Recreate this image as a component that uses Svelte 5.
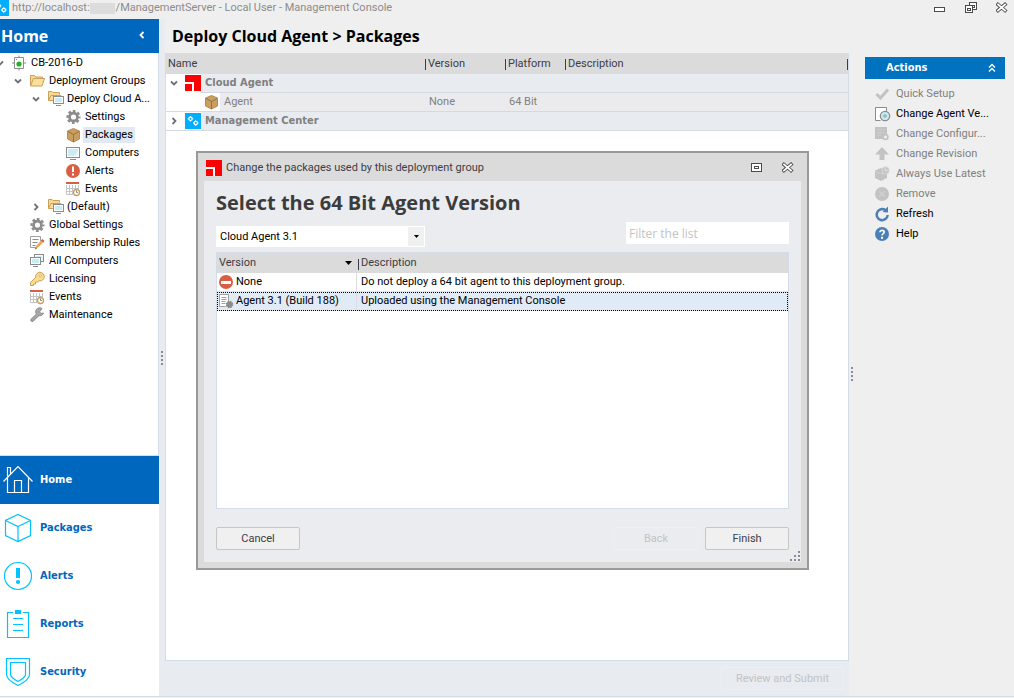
<script>
    let activeSection = $state('Home');
    let selectedNode = $state('Packages');
    let selectedVersion = $state('Agent 3.1 (Build 188)');
    let dialogOpen = $state(true);
    let filter = $state('');

    const tree = [
        { level: 0, label: 'CB-2016-D', icon: 'server', state: 'open' },
        { level: 1, label: 'Deployment Groups', icon: 'folder', state: 'open' },
        { level: 2, label: 'Deploy Cloud A...', icon: 'group', state: 'open' },
        { level: 3, label: 'Settings', icon: 'gear' },
        { level: 3, label: 'Packages', icon: 'box' },
        { level: 3, label: 'Computers', icon: 'computer' },
        { level: 3, label: 'Alerts', icon: 'alert' },
        { level: 3, label: 'Events', icon: 'events' },
        { level: 2, label: '(Default)', icon: 'group', state: 'closed' },
        { level: 1, label: 'Global Settings', icon: 'gear' },
        { level: 1, label: 'Membership Rules', icon: 'rules' },
        { level: 1, label: 'All Computers', icon: 'computers' },
        { level: 1, label: 'Licensing', icon: 'key' },
        { level: 1, label: 'Events', icon: 'events' },
        { level: 1, label: 'Maintenance', icon: 'wrench' }
    ];

    const sections = ['Home', 'Packages', 'Alerts', 'Reports', 'Security'];

    const actions = [
        { label: 'Quick Setup', icon: 'check', disabled: true },
        { label: 'Change Agent Ve...', icon: 'disc' },
        { label: 'Change Configur...', icon: 'config', disabled: true },
        { label: 'Change Revision', icon: 'up', disabled: true },
        { label: 'Always Use Latest', icon: 'latest', disabled: true },
        { label: 'Remove', icon: 'remove', disabled: true },
        { label: 'Refresh', icon: 'refresh' },
        { label: 'Help', icon: 'help' }
    ];

    const versions = [
        { name: 'None', icon: 'none', description: 'Do not deploy a 64 bit agent to this deployment group.' },
        { name: 'Agent 3.1 (Build 188)', icon: 'agent', description: 'Uploaded using the Management Console' }
    ];

    let visibleVersions = $derived(
        versions.filter((v) => v.name.toLowerCase().includes(filter.toLowerCase()))
    );
</script>

{#snippet chevron(state)}
    <svg class="chevron" width="8" height="8" viewBox="0 0 8 8" aria-hidden="true">
        {#if state === 'open'}
            <path d="M1 2.5L4 5.5L7 2.5" fill="none" stroke="#707078" stroke-width="1.8" />
        {:else if state === 'closed'}
            <path d="M2.5 1L5.5 4L2.5 7" fill="none" stroke="#707078" stroke-width="1.8" />
        {/if}
    </svg>
{/snippet}

{#snippet icon(name)}
    <svg class="icon" width="16" height="16" viewBox="0 0 16 16" fill="none" aria-hidden="true">
        {#if name === 'server'}
            <path d="M7 0.5V3M7 13v2.5" stroke="#8c8c8c" />
            <path d="M2.5 2.5h9v11h-9z" fill="#fff" stroke="#8c8c8c" />
            <path d="M0 8h3M11 8h3" stroke="#8c8c8c" />
            <rect x="4" y="4" width="1" height="1" fill="#1fc01f" />
            <circle cx="7" cy="9" r="2.6" fill="#1fb41f" />
        {:else if name === 'folder'}
            <path d="M0.5 12.5V2.5h4l1.5 1.5h6.500v2" fill="#f7d88c" stroke="#c9a05c" />
            <path d="M0.5 13L3.5 5.500h11L12 13z" fill="#fbdf98" stroke="#c9a05c" />
        {:else if name === 'group'}
            <path d="M0.5 9.500V0.500h3.500l1 1h6.500v2" fill="#f7d88c" stroke="#c9a05c" />
            <path d="M0.500 9.500L3 4.500h10v5z" fill="#fbdf98" stroke="#c9a05c" />
            <rect x="5.500" y="5.500" width="10" height="7" fill="#fff" stroke="#8c8c8c" />
            <rect x="7" y="7" width="7" height="4" fill="#c5ecf3" />
            <path d="M8 14.500h5" stroke="#8c8c8c" />
        {:else if name === 'gear'}
            <circle cx="7.500" cy="8" r="4" stroke="#8c8c8c" stroke-width="2.800" />
            <circle cx="7.500" cy="8" r="6" stroke="#8c8c8c" stroke-width="2.200" stroke-dasharray="2.700 2.010" stroke-dashoffset="1.350" />
        {:else if name === 'box'}
            <path d="M7.500 1.500L13.500 4v8l-6 3-6-3V4z" fill="#c89f60" stroke="#b58d50" />
            <path d="M2 4.500L7.500 7.500l5.500-3M7.500 7.500V15" stroke="#937342" />
        {:else if name === 'computer'}
            <rect x="0.500" y="2.500" width="13" height="10" fill="#fff" stroke="#8c8c8c" />
            <rect x="2" y="4" width="10" height="7" fill="#c9edf3" />
            <path d="M8 11l4-5v5z" fill="#e3f7fa" />
            <path d="M4 14.500h6" stroke="#8c8c8c" />
        {:else if name === 'computers'}
            <rect x="4.500" y="1.500" width="9" height="7" fill="#fff" stroke="#8c8c8c" />
            <path d="M6 3.500h6v4" stroke="#c9edf3" />
            <rect x="0.500" y="4.500" width="10" height="7" fill="#fff" stroke="#8c8c8c" />
            <rect x="2" y="6" width="7" height="4" fill="#c5ecf3" />
            <path d="M3 13.500h5" stroke="#8c8c8c" />
        {:else if name === 'alert'}
            <circle cx="7" cy="8" r="7" fill="#d85f44" />
            <path d="M6 3.500h2V9H6zM6 10.500h2v2H6z" fill="#fff" />
        {:else if name === 'events'}
            <path d="M0.500 4v9.500h6M0 7.500h13M0 10.500h7M3.500 4v10M6.500 4v10M9.500 4v4M12.500 4v4" stroke="#c4c4c4" />
            <rect x="0" y="1" width="13" height="2" fill="#d85f44" />
            <circle cx="10.500" cy="11.500" r="3" fill="#fff" stroke="#c9a05c" stroke-width="1.300" />
            <path d="M10.500 9.500v2h1.500" stroke="#8c8c8c" />
        {:else if name === 'rules'}
            <path d="M10.500 6V1.500h-10v11h7" fill="#fff" stroke="#a0a0a0" />
            <path d="M2.500 4.500h6M2.500 7.500h5M2.500 10.500h3" stroke="#8c8c8c" />
            <path d="M5 14.500l1-3.500 6-6.500 2 2-6.500 6.500z" fill="#efa552" />
            <path d="M11 5.500L12.500 4l2 2L13 7.500z" fill="#d85f44" />
            <path d="M5 14.500l0.600-2 1.500 1.200z" fill="#777" />
        {:else if name === 'key'}
            <path d="M0.500 14.500v-3l5.200-5.200A4.300 4.300 0 1 1 9 9.800l-1.500 1.200h-2v2H3.500v1.500z" fill="#fbdc88" stroke="#c9a05c" />
            <circle cx="10.200" cy="4.700" r="1.200" fill="#fff" stroke="#c9a05c" stroke-width="0.800" />
        {:else if name === 'wrench'}
            <path d="M2.300 13L8 7.500" stroke="#8c8c8c" stroke-width="3.800" stroke-linecap="round" />
            <path d="M12 1.500a4 4 0 1 0 1.500 4.500l-2.500 0.500-1.500-1.700z" fill="#a8a8a8" stroke="#8c8c8c" />
            <path d="M2.500 12.800L9 6.500" stroke="#a8a8a8" stroke-width="2" stroke-linecap="round" />
        {:else if name === 'cloudAgent'}
            <rect width="16" height="16" fill="#f00" />
            <path d="M0 8h8v8" stroke="#fff" stroke-width="2" />
        {:else if name === 'console'}
            <rect width="16" height="16" fill="#00aeff" />
            <circle cx="5.500" cy="5.800" r="1.700" stroke="#fff" stroke-width="1.200" />
            <circle cx="10.800" cy="10" r="1.700" stroke="#fff" stroke-width="1.200" />
            <path d="M5.500 3v5.600M2.700 5.800h5.600" stroke="#fff" stroke-dasharray="1 3.600" />
            <path d="M10.800 7.200v5.600M8 10h5.600" stroke="#fff" stroke-dasharray="1 3.600" />
        {:else if name === 'check'}
            <path d="M1.500 8l4 4 7.500-8.500" stroke="#c3c3c3" stroke-width="3" />
        {:else if name === 'disc'}
            <path d="M11.500 6V1.500h-11v13h5" fill="#fff" stroke="#8c8c8c" />
            <circle cx="10" cy="10" r="4.700" fill="#c5ecf3" stroke="#8c8c8c" stroke-width="1.200" />
            <circle cx="10" cy="10" r="1.200" fill="#fff" stroke="#6d8a94" stroke-width="0.900" />
        {:else if name === 'config'}
            <path d="M0 1h12v6L8 13H0z" fill="#c3c3c3" />
            <path d="M2 4h7M2 6.500h7M2 9h4" stroke="#cecece" />
            <circle cx="10.500" cy="11" r="2.400" fill="#efefef" stroke="#c3c3c3" stroke-width="1.700" />
        {:else if name === 'up'}
            <path d="M7 1l7 7.500h-4.500V14h-5V8.500H0z" fill="#c3c3c3" />
        {:else if name === 'latest'}
            <path d="M0 4.500L6 2l6 2.500v7.500L6 15l-6-3z" fill="#c3c3c3" />
            <path d="M0.500 5.500L6 8l4-1.500" stroke="#d2d2d2" />
            <circle cx="10.500" cy="4.500" r="3.700" fill="#c8c8c8" stroke="#d8d8d8" />
            <path d="M10.500 2.500v2h2" stroke="#e2e2e2" />
        {:else if name === 'remove'}
            <circle cx="7" cy="8" r="7" fill="#c3c3c3" />
            <path d="M4.200 5.200l5.600 5.600M9.800 5.200l-5.600 5.600" stroke="#cecece" stroke-width="1.800" />
        {:else if name === 'refresh'}
            <path d="M10.500 4.200A5.500 5.500 0 1 0 12.700 9" stroke="#4a7fb8" stroke-width="2.500" />
            <path d="M7.500 6L13 6.500V0.500z" fill="#4a7fb8" />
        {:else if name === 'help'}
            <circle cx="7" cy="8" r="7" fill="#4a7fb8" />
            <path d="M4.900 6.200C4.900 3.700 9.200 3.800 9.200 6.200C9.200 7.700 7 7.600 7 9.500" stroke="#fff" stroke-width="1.600" />
            <rect x="6" y="10.800" width="2" height="2" fill="#fff" />
        {:else if name === 'none'}
            <circle cx="8" cy="8" r="7" fill="#d85f44" />
            <rect x="3" y="7" width="10" height="3" fill="#fff" />
        {:else if name === 'agent'}
            <path d="M10.500 8V1.500h-9v12h6" fill="#fff" stroke="#a0a0a0" />
            <path d="M3.500 4.500h5M3.500 6.500h5M3.500 8.500h4M3.500 10.500h4" stroke="#a0a0a0" />
            <circle cx="11.500" cy="11.500" r="3" fill="#8c8c8c" stroke="#8c8c8c" stroke-width="1.500" stroke-dasharray="1.500 0.860" />
        {/if}
    </svg>
{/snippet}

{#snippet sectionIcon(name)}
    <svg width="32" height="32" viewBox="0 0 32 32" fill="none" stroke="currentColor" stroke-width="1.200" aria-hidden="true">
        {#if name === 'Home'}
            <path d="M1.500 17.500L16 2.500l14.500 15M5.500 13.500v15h21v-15M5.500 12.500v-9h3v6M12.500 28.500v-12h7v12" />
        {:else if name === 'Packages'}
            <path d="M16 2.500L28.500 8.500v15L16 29.500 3.500 23.500v-15zM3.500 8.500L16 14.500l12.500-6M16 14.500v15" />
        {:else if name === 'Alerts'}
            <circle cx="16" cy="16" r="13.500" />
            <rect x="14" y="8" width="4" height="10" fill="currentColor" stroke="none" />
            <circle cx="16" cy="22" r="2.100" fill="currentColor" stroke="none" />
        {:else if name === 'Reports'}
            <path d="M11 4.500H5.500v25h21v-25H21M11 10.500h10M11 16.500h10M11 22.500h10" />
            <rect x="13" y="2" width="6" height="4" fill="currentColor" stroke="none" />
        {:else}
            <path d="M4.500 2.500h23v16c0 4-5.500 8-11.500 11-6-3-11.500-7-11.500-11z" />
            <path d="M8.500 6.500h15v12c0 2-3 4.500-7.500 7-4.500-2.500-7.500-5-7.500-7z" />
        {/if}
    </svg>
{/snippet}

{#snippet closeGlyph()}
    <svg width="12" height="12" viewBox="0 0 12 12" fill="none" aria-hidden="true">
        <path d="M2 2.500l7 6M9 2.500l-7 6" stroke="#4b4b4b" stroke-width="3.600" stroke-linecap="square" />
        <path d="M2 2.500l7 6M9 2.500l-7 6" stroke="#fff" stroke-width="1.800" stroke-linecap="square" />
    </svg>
{/snippet}

<div class="window">
    <header class="titlebar">
        <span class="app-icon">{@render icon('console')}</span>
        <span class="title">http://localhost:<span class="port"></span>/ManagementServer - Local User - Management Console</span>
        <div class="window-buttons">
            <button type="button" aria-label="Minimize">
                <svg width="12" height="12" viewBox="0 0 12 12"><rect x="0.500" y="5.500" width="10" height="4" fill="#fff" stroke="#4b4b4b" /></svg>
            </button>
            <button type="button" aria-label="Restore">
                <svg width="12" height="12" viewBox="0 0 12 12" fill="#fff" stroke="#4b4b4b">
                    <rect x="4.500" y="0.500" width="7" height="7" />
                    <rect x="7.500" y="3.500" width="2" height="2" />
                    <rect x="0.500" y="3.500" width="7" height="7" />
                    <rect x="2.500" y="6.500" width="3" height="2" />
                </svg>
            </button>
            <button type="button" aria-label="Close">{@render closeGlyph()}</button>
        </div>
    </header>

    <div class="workspace">
        <aside class="sidebar">
            <div class="sidebar-header">
                <h2>{activeSection}</h2>
                <button type="button" aria-label="Collapse">
                    <svg width="8" height="8" viewBox="0 0 8 8"><path d="M5.500 1L2.500 4L5.500 7" fill="none" stroke="#fff" stroke-width="1.800" /></svg>
                </button>
            </div>

            <ul class="tree">
                {#each tree as node}
                    <li class="level-{node.level}">
                        <button
                            type="button"
                            class="tree-row"
                            class:selected={node.label === selectedNode}
                            onclick={() => (selectedNode = node.label)}
                        >
                            {@render chevron(node.state)}
                            {@render icon(node.icon)}
                            <span class="tree-label">{node.label}</span>
                        </button>
                    </li>
                {/each}
            </ul>

            <nav class="sections">
                {#each sections as section}
                    <button
                        type="button"
                        class:active={section === activeSection}
                        onclick={() => (activeSection = section)}
                    >
                        {@render sectionIcon(section)}
                        <span>{section}</span>
                    </button>
                {/each}
            </nav>
        </aside>

        <div class="splitter"><span></span><span></span><span></span><span></span></div>

        <main>
            <h1>Deploy Cloud Agent &gt; Packages</h1>

            <div class="panel">
                <table class="packages">
                    <thead>
                        <tr>
                            <th class="col-name">Name</th>
                            <th class="col-version">Version</th>
                            <th class="col-platform">Platform</th>
                            <th class="last">Description</th>
                        </tr>
                    </thead>
                    <tbody>
                        <tr class="product">
                            <td>
                                <div class="name-cell">
                                    <span class="gutter over">{@render chevron('open')}{@render icon('cloudAgent')}</span>
                                    Cloud Agent
                                </div>
                            </td>
                            <td></td>
                            <td></td>
                            <td></td>
                        </tr>
                        <tr>
                            <td>
                                <div class="name-cell">
                                    <span class="gutter child">{@render icon('box')}</span>
                                    Agent
                                </div>
                            </td>
                            <td>None</td>
                            <td>64 Bit</td>
                            <td></td>
                        </tr>
                        <tr class="product">
                            <td>
                                <div class="name-cell">
                                    <span class="gutter">{@render chevron('closed')}{@render icon('console')}</span>
                                    Management Center
                                </div>
                            </td>
                            <td></td>
                            <td></td>
                            <td></td>
                        </tr>
                    </tbody>
                </table>
            </div>

            <footer>
                <button type="button" class="push" disabled>Review and Submit</button>
            </footer>

            {#if dialogOpen}
                <div class="dialog" role="dialog" aria-labelledby="dialog-title">
                    <div class="dialog-titlebar">
                        {@render icon('cloudAgent')}
                        <span id="dialog-title">Change the packages used by this deployment group</span>
                        <div class="dialog-window-buttons">
                            <button type="button" aria-label="Maximize">
                                <svg width="12" height="12" viewBox="0 0 12 12" fill="#fff" stroke="#4b4b4b">
                                    <rect x="0.500" y="1.500" width="10" height="8" />
                                    <rect x="3.500" y="4.500" width="4" height="2" />
                                </svg>
                            </button>
                            <button type="button" aria-label="Close dialog" onclick={() => (dialogOpen = false)}>
                                {@render closeGlyph()}
                            </button>
                        </div>
                    </div>

                    <div class="dialog-body">
                        <h2>Select the 64 Bit Agent Version</h2>

                        <div class="filters">
                            <div class="select-wrap">
                                <select aria-label="Product version">
                                    <option>Cloud Agent 3.1</option>
                                </select>
                                <span class="arrow">
                                    <svg width="5" height="3" viewBox="0 0 5 3"><path d="M0 0h5L2.500 3z" fill="#000" /></svg>
                                </span>
                            </div>
                            <input type="text" aria-label="Filter" placeholder="Filter the list" bind:value={filter} />
                        </div>

                        <div class="version-list">
                            <table>
                                <thead>
                                    <tr>
                                        <th class="col-version">
                                            <div class="sorted">
                                                Version
                                                <svg width="7" height="4" viewBox="0 0 7 4"><path d="M0 0h7L3.500 4z" fill="#000" /></svg>
                                            </div>
                                        </th>
                                        <th>Description</th>
                                    </tr>
                                </thead>
                                <tbody>
                                    {#each visibleVersions as version}
                                        <tr
                                            class:selected={version.name === selectedVersion}
                                            onclick={() => (selectedVersion = version.name)}
                                        >
                                            <td>
                                                <div class="version-cell">
                                                    {@render icon(version.icon)}
                                                    {version.name}
                                                </div>
                                            </td>
                                            <td>{version.description}</td>
                                        </tr>
                                    {/each}
                                </tbody>
                            </table>
                        </div>

                        <div class="dialog-buttons">
                            <button type="button" class="push" onclick={() => (dialogOpen = false)}>Cancel</button>
                            <button type="button" class="push back" disabled>Back</button>
                            <button type="button" class="push">Finish</button>
                        </div>
                    </div>

                    <svg class="grip" width="10" height="10" viewBox="0 0 10 10" fill="#8c8c94" aria-hidden="true">
                        <path d="M8 0h2v2H8zM4 4h2v2H4zM8 4h2v2H8zM0 8h2v2H0zM4 8h2v2H4zM8 8h2v2H8z" />
                    </svg>
                </div>
            {/if}
        </main>

        <div class="splitter right"><span></span><span></span><span></span><span></span></div>

        <aside class="actions">
            <div class="actions-header">
                <h2>Actions</h2>
                <svg width="8" height="10" viewBox="0 0 8 10"><path d="M1 4.500L4 1.500l3 3M1 8.500L4 5.500l3 3" fill="none" stroke="#fff" stroke-width="1.300" /></svg>
            </div>
            {#each actions as action}
                <button type="button" class="action" disabled={action.disabled}>
                    {@render icon(action.icon)}
                    <span>{action.label}</span>
                </button>
            {/each}
        </aside>
    </div>
</div>

<style>
    :global(body) {
        background: #efefef;
    }

    .window {
        display: flex;
        flex-direction: column;
        min-height: 100vh;
        box-sizing: border-box;
        font-family: Tahoma, Roboto, 'Open Sans', sans-serif;
        font-size: 11px;
        line-height: 18px;
        color: #000;
        overflow: hidden;
    }

    button {
        padding: 0;
        border: none;
        background: none;
        font: inherit;
        color: inherit;
    }

    h1,
    h2 {
        margin: 0;
        font-family: 'Open Sans', 'Segoe UI', sans-serif;
        font-weight: 700;
    }

    .icon,
    .chevron {
        flex: none;
        display: block;
    }

    .titlebar {
        display: flex;
        align-items: flex-start;
        height: 19px;
        color: #8c8c8c;
    }

    .app-icon {
        margin-left: -7px;
        margin-right: 3px;
    }

    .title {
        flex: 1;
        line-height: 16px;
        white-space: nowrap;
    }

    .port {
        display: inline-block;
        width: 25px;
        height: 11px;
        margin-right: 1px;
        background: #dcdcdc;
        vertical-align: middle;
    }

    .window-buttons {
        display: flex;
        gap: 19px;
        padding: 2px 6px 0 0;
    }

    .window-buttons svg,
    .dialog-window-buttons svg {
        display: block;
    }

    .workspace {
        flex: 1;
        display: flex;
        margin-bottom: 1px;
        border-bottom: 1px solid #d3dde7;
    }

    .sidebar {
        flex: none;
        display: flex;
        flex-direction: column;
        width: 159px;
        background: #fff;
    }

    .sidebar-header {
        display: flex;
        align-items: center;
        justify-content: space-between;
        height: 34px;
        padding: 0 13px 0 1px;
        background: #0067be;
        color: #fff;
    }

    .sidebar-header h2 {
        font-size: 16px;
    }

    .tree {
        flex: 1;
        margin: 0;
        padding: 1px 0 0;
        list-style: none;
        overflow: hidden;
        border-right: 1px solid #d3dde7;
        border-bottom: 1px solid #d3dde7;
    }

    .tree-row {
        display: flex;
        align-items: center;
        height: 18px;
        margin-left: -4px;
        white-space: nowrap;
    }

    .tree-row .chevron {
        margin-right: 8px;
    }

    .tree-label {
        margin-left: 1px;
        padding: 0 2px;
        line-height: 16px;
    }

    .tree-row.selected .tree-label {
        background: #e1e9f3;
    }

    .level-1 {
        padding-left: 18px;
    }

    .level-2 {
        padding-left: 36px;
    }

    .level-3 {
        padding-left: 54px;
    }

    .sections button {
        display: flex;
        align-items: center;
        gap: 6px;
        width: 100%;
        height: 48px;
        padding-left: 2px;
        color: #00c3ff;
    }

    .sections span {
        color: #0067be;
    }

    .sections .active,
    .sections .active span {
        background: #0067be;
        color: #fff;
    }

    .splitter {
        flex: none;
        display: flex;
        flex-direction: column;
        align-items: center;
        justify-content: center;
        gap: 2px;
        width: 6px;
        background: #e8ebf0;
    }

    .splitter span {
        width: 2px;
        height: 2px;
        background: #8c8c94;
    }

    .splitter.right {
        background: none;
        padding-top: 32px;
    }

    main {
        flex: 1;
        display: flex;
        flex-direction: column;
        position: relative;
        min-width: 0;
    }

    h1 {
        padding: 0 7px;
        font-size: 16px;
        line-height: 34px;
    }

    .panel {
        flex: 1;
        border: 1px solid #d3dde7;
        border-top: none;
        background: #fff;
    }

    table {
        width: 100%;
        border-spacing: 0;
        table-layout: fixed;
    }

    th,
    td {
        padding: 0 0 0 5px;
        text-align: left;
        white-space: nowrap;
    }

    th {
        height: 21px;
        padding-left: 2px;
        background: #dbdbdb;
        color: #3c3c46;
        font-weight: 400;
    }

    th + th {
        background: linear-gradient(#3c3c46, #3c3c46) 1px 6px / 1px 11px no-repeat #dbdbdb;
        padding-left: 4px;
    }

    .packages .col-name {
        width: 256px;
    }

    .packages .col-version {
        width: 76px;
    }

    .packages .col-platform {
        width: 56px;
    }

    .packages .last {
        background:
            linear-gradient(#3c3c46, #3c3c46) 1px 6px / 1px 11px no-repeat,
            linear-gradient(#3c3c46, #3c3c46) right 6px / 1px 11px no-repeat #dbdbdb;
    }

    .packages td {
        height: 18px;
        border-bottom: 1px solid #d5dae0;
        background: #ebebed;
        color: #808080;
    }

    .packages td:first-child {
        padding: 0;
    }

    .packages .product td {
        background: #e8ebf0;
    }

    .product td,
    .sections button,
    .actions-header h2 {
        font-family: Tahoma, 'DejaVu Sans Condensed', 'Open Sans', sans-serif;
        font-weight: 700;
    }

    .name-cell {
        display: flex;
        gap: 4px;
    }

    .gutter {
        display: flex;
        align-items: center;
        gap: 7px;
        height: 18px;
        padding-left: 4px;
        background: #fff;
    }

    .gutter.over {
        margin-bottom: -1px;
        padding-bottom: 1px;
    }

    .gutter.child {
        padding-left: 38px;
    }

    footer {
        display: flex;
        align-items: center;
        justify-content: flex-end;
        height: 35px;
        padding-right: 5px;
        background: #e8ebf0;
    }

    .push {
        box-sizing: border-box;
        min-width: 84px;
        height: 23px;
        padding: 0 14px;
        border: 1px solid #c6c6c6;
        border-radius: 2px;
        background: #f0f0f0;
        color: #3c3c46;
    }

    .push:disabled {
        border-color: #eeeff1;
        background: none;
        color: #c3c3c3;
    }

    .dialog {
        position: absolute;
        top: 132px;
        left: 31px;
        right: 40px;
        display: flex;
        flex-direction: column;
        box-sizing: border-box;
        height: 419px;
        padding: 0 6px 6px;
        border: 2px solid #999;
        background: #dbdbdb;
    }

    .dialog-titlebar {
        display: flex;
        align-items: center;
        gap: 4px;
        height: 28px;
        padding: 2px 7px 0 2px;
        box-sizing: border-box;
        color: #3c3c46;
    }

    .dialog-window-buttons {
        display: flex;
        gap: 19px;
        margin-left: auto;
    }

    .dialog-body {
        flex: 1;
        display: flex;
        flex-direction: column;
        padding: 6px 12px 12px;
        background: #ebecf0;
    }

    .dialog-body h2 {
        font-size: 20px;
        line-height: 32px;
        color: #3c3c3c;
    }

    .filters {
        display: flex;
        align-items: flex-end;
        justify-content: space-between;
        box-sizing: border-box;
        height: 28px;
        padding-top: 3px;
    }

    .select-wrap {
        position: relative;
        width: 209px;
        height: 21px;
    }

    select,
    input {
        box-sizing: border-box;
        width: 100%;
        height: 21px;
        margin: 0;
        padding: 0 4px;
        border: none;
        border-radius: 0;
        outline: none;
        background: #fff;
        font: inherit;
        appearance: none;
    }

    .arrow {
        position: absolute;
        top: 1px;
        right: 1px;
        bottom: 1px;
        display: flex;
        align-items: center;
        justify-content: center;
        width: 16px;
        background: #f0f0f0;
        pointer-events: none;
    }

    input {
        align-self: flex-start;
        width: 163px;
        height: 22px;
        padding: 0 3px;
        font-family: 'Open Sans', 'Segoe UI', sans-serif;
        font-size: 12px;
    }

    input::placeholder {
        color: #c3c3c3;
    }

    .version-list {
        flex: 1;
        margin-top: 5px;
        border: 1px solid #d3dde7;
        background: #fff;
    }

    .version-list th {
        height: 20px;
    }

    .version-list .col-version {
        width: 138px;
    }

    .version-list td {
        height: 18px;
        padding-left: 4px;
        border-bottom: 1px solid #e3e3e6;
    }

    .version-list td:first-child {
        padding-left: 1px;
        border-right: 1px solid #dcdce0;
    }

    .version-list tr.selected {
        outline: 1px dotted #000;
        outline-offset: -1px;
        background: #e1ebf5;
    }

    .sorted {
        display: flex;
        align-items: center;
        justify-content: space-between;
        padding-right: 5px;
    }

    .version-cell {
        display: flex;
        align-items: center;
        gap: 2px;
    }

    .dialog-buttons {
        display: flex;
        gap: 7px;
        margin-top: 18px;
    }

    .back {
        margin-left: auto;
    }

    .grip {
        position: absolute;
        right: 7px;
        bottom: 7px;
    }

    .actions {
        flex: none;
        width: 140px;
        margin: 38px 9px 0 10px;
    }

    .actions-header {
        display: flex;
        align-items: center;
        justify-content: space-between;
        height: 22px;
        margin-bottom: 5px;
        padding: 0 9px 0 21px;
        background: #0072c0;
        color: #fff;
    }

    .actions-header h2 {
        font-size: 11px;
    }

    .action {
        display: flex;
        align-items: center;
        gap: 5px;
        width: 100%;
        height: 20px;
        padding-left: 10px;
        white-space: nowrap;
    }

    .action:disabled {
        color: #808080;
    }
</style>
